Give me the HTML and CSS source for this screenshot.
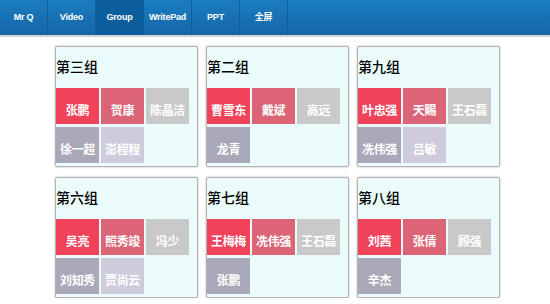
FILE: index.html
```html
<!DOCTYPE html>
<html>
<head>
<meta charset="utf-8">
<link rel="stylesheet" href="styles.css">
</head>
<body>
<nav class="nav">
  <a class="nav-item">Mr Q</a>
  <a class="nav-item">Video</a>
  <a class="nav-item active">Group</a>
  <a class="nav-item">WritePad</a>
  <a class="nav-item">PPT</a>
  <a class="nav-item">全屏</a>
</nav>
<main class="groups">
  <section class="card">
    <h2 class="title">第三组</h2>
    <div class="tiles">
      <div class="tile c1">张鹏</div><div class="tile c2">贺康</div><div class="tile c3">陈晶洁</div>
      <div class="tile c4">徐一超</div><div class="tile c5">澎程程</div>
    </div>
  </section>
  <section class="card">
    <h2 class="title">第二组</h2>
    <div class="tiles">
      <div class="tile c1">曹雪东</div><div class="tile c2">戴斌</div><div class="tile c3">高远</div>
      <div class="tile c4">龙青</div>
    </div>
  </section>
  <section class="card">
    <h2 class="title">第九组</h2>
    <div class="tiles">
      <div class="tile c1">叶忠强</div><div class="tile c2">天赐</div><div class="tile c3">王石磊</div>
      <div class="tile c4">冼伟强</div><div class="tile c5">吕敏</div>
    </div>
  </section>
  <section class="card">
    <h2 class="title">第六组</h2>
    <div class="tiles">
      <div class="tile c1">吴亮</div><div class="tile c2">照秀竣</div><div class="tile c3">冯少</div>
      <div class="tile c4">刘知秀</div><div class="tile c5">贾尚云</div>
    </div>
  </section>
  <section class="card">
    <h2 class="title">第七组</h2>
    <div class="tiles">
      <div class="tile c1">王梅梅</div><div class="tile c2">冼伟强</div><div class="tile c3">王石磊</div>
      <div class="tile c4">张鹏</div>
    </div>
  </section>
  <section class="card">
    <h2 class="title">第八组</h2>
    <div class="tiles">
      <div class="tile c1">刘茜</div><div class="tile c2">张倩</div><div class="tile c3">顾强</div>
      <div class="tile c4">辛杰</div>
    </div>
  </section>
</main>
</body>
</html>
```
FILE: styles.css
```css
html, body {
  margin: 0;
  padding: 0;
  background: #ffffff;
}
body {
  font-family: "Liberation Sans", "Noto Sans CJK SC", sans-serif;
}
.nav {
  display: flex;
  height: 35px;
  background: linear-gradient(to bottom, #1b7dc1, #1566a7);
  border-bottom: 2px solid #d4d4d4;
}
.nav-item {
  width: 47px;
  border-right: 1px solid #105e9c;
  color: #ffffff;
  font-size: 9px;
  font-weight: bold;
  text-align: center;
  line-height: 35px;
  letter-spacing: -0.2px;
}
.nav-item.active {
  background: #0c5d9b;
}
.groups {
  display: grid;
  grid-template-columns: repeat(3, 143px);
  column-gap: 8px;
  row-gap: 10px;
  padding: 9px 0 0 55px;
}
.card {
  height: 119px;
  background: #ebfbfb;
  border: 1px solid #b4b4b4;
  border-radius: 2px;
  box-shadow: 0 0 2px rgba(0, 0, 0, 0.35);
}
.title {
  margin: 9px 0 12px 0;
  font-family: "Noto Sans CJK SC", sans-serif;
  font-size: 14px;
  font-weight: 500;
  line-height: 20px;
  color: #000000;
}
.tiles {
  display: grid;
  grid-template-columns: repeat(3, 43px);
  grid-auto-rows: 36px;
  column-gap: 2px;
  row-gap: 3px;
}
.tile {
  box-sizing: border-box;
  padding-top: 14px;
  font-family: "Noto Sans CJK SC", sans-serif;
  font-size: 12px;
  font-weight: bold;
  line-height: 16px;
  color: #ffffff;
  text-align: center;
  white-space: nowrap;
  letter-spacing: -0.3px;
}
.c1 { background: #f0435a; }
.c2 { background: #dc6477; }
.c3 { background: #c9c9c9; }
.c4 { background: #a9a8b8; }
.c5 { background: #cecbdd; }
```
